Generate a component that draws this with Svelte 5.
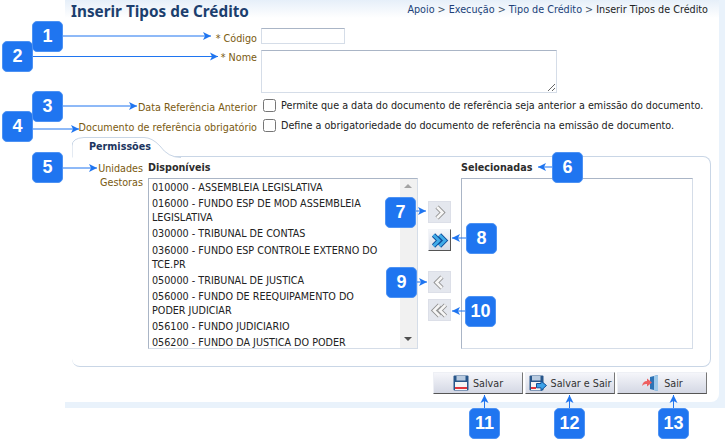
<script lang="ts">
	const units = [
		'010000 - ASSEMBLEIA LEGISLATIVA',
		'016000 - FUNDO ESP DE MOD ASSEMBLEIA LEGISLATIVA',
		'030000 - TRIBUNAL DE CONTAS',
		'036000 - FUNDO ESP CONTROLE EXTERNO DO TCE.PR',
		'050000 - TRIBUNAL DE JUSTICA',
		'056000 - FUNDO DE REEQUIPAMENTO DO PODER JUDICIAR',
		'056100 - FUNDO JUDICIARIO',
		'056200 - FUNDO DA JUSTICA DO PODER'
	];

	const callouts = [
		{ n: 1, x: 32, y: 21 },
		{ n: 2, x: 2, y: 41 },
		{ n: 3, x: 32, y: 91 },
		{ n: 4, x: 2, y: 111 },
		{ n: 5, x: 32, y: 152 },
		{ n: 6, x: 552, y: 152 },
		{ n: 7, x: 385, y: 197 },
		{ n: 8, x: 466, y: 223 },
		{ n: 9, x: 386, y: 267 },
		{ n: 10, x: 465, y: 296 },
		{ n: 11, x: 469, y: 408 },
		{ n: 12, x: 554, y: 408 },
		{ n: 13, x: 658, y: 408 }
	];

	// x1,y1 -> tip x2,y2
	const arrows = [
		[62, 36, 211, 36],
		[32, 56.5, 218, 56.5],
		[62, 106, 137, 106],
		[32, 129, 79, 129],
		[62, 168, 97, 168],
		[552, 167, 538, 167],
		[415, 211, 426, 211],
		[466, 238, 452, 238],
		[416, 282, 427, 282],
		[465, 311, 452, 311],
		[484.5, 408, 484.5, 395],
		[569.5, 408, 569.5, 395],
		[673.5, 408, 673.5, 395]
	];

	function head(a: number[]) {
		const [x1, y1, x2, y2] = a;
		const dx = Math.sign(x2 - x1);
		const dy = Math.sign(y2 - y1);
		const bx = x2 - dx * 8;
		const by = y2 - dy * 8;
		return `${x2},${y2} ${bx + dy * 4},${by + dx * 4} ${bx + dx * 2},${by + dy * 2} ${bx - dy * 4},${by - dx * 4}`;
	}
</script>

<div class="page">
	<main class="panel">
		<div class="inner">
			<header class="top">
				<h1>Inserir Tipos de Crédito</h1>
				<nav>
					<a href="#a">Apoio</a> &gt; <a href="#b">Execução</a> &gt; <a href="#c">Tipo de Crédito</a> &gt; <span>Inserir Tipos de Crédito</span>
				</nav>
			</header>

			<form class="fields" onsubmit={(e) => e.preventDefault()}>
				<label for="cod" class="lbl">* Código</label>
				<input id="cod" class="inp" type="text" />

				<label for="nome" class="lbl nome">* Nome</label>
				<textarea id="nome" class="inp area"></textarea>

				<span class="lbl">Data Referência Anterior</span>
				<label class="chk"><input type="checkbox" /> Permite que a data do documento de referência seja anterior a emissão do documento.</label>

				<span class="lbl">Documento de referência obrigatório</span>
				<label class="chk"><input type="checkbox" /> Define a obrigatoriedade do documento de referência na emissão de documento.</label>
			</form>

			<section class="tabs">
				<div class="tab">
					<svg class="tab-shape" width="109" height="21" viewBox="0 0 109 21">
						<path d="M0 20.5 L0 9 Q0 1 12 .5 L72 .5 Q80 .5 88 9 Q96 20.5 109 20.5" fill="#fff" stroke="#c9d6e6" />
					</svg>
					<span>Permissões</span>
				</div>
				<div class="box">
					<div class="side">Unidades Gestoras</div>
					<div class="col avail">
						<h2>Disponíveis</h2>
						<div class="list">
							<ul>
								{#each units as u}
									<li>{u}</li>
								{/each}
							</ul>
							<div class="scroll">
								<i class="up"></i>
								<i class="down"></i>
							</div>
						</div>
					</div>
					<div class="moves">
						<button class="mv" type="button" aria-label="Adicionar">
							<svg width="17" height="17" viewBox="0 0 17 17">
								<path d="M6 3 L11.5 8.5 L6 14" fill="none" stroke="#8f8f8f" stroke-width="4.4" />
								<path d="M6 3 L11.5 8.5 L6 14" fill="none" stroke="#f6f6f6" stroke-width="2.6" />
							</svg>
						</button>
						<button class="mv on" type="button" aria-label="Adicionar todos">
							<svg width="19" height="17" viewBox="0 0 19 17">
								<path d="M3.5 3 L9 8.5 L3.5 14 M9.5 3 L15 8.5 L9.5 14" fill="none" stroke="#124f9c" stroke-width="4.6" />
								<path d="M3.5 3 L9 8.5 L3.5 14 M9.5 3 L15 8.5 L9.5 14" fill="none" stroke="#41ace9" stroke-width="2.8" />
							</svg>
						</button>
						<button class="mv gap" type="button" aria-label="Remover">
							<svg width="17" height="17" viewBox="0 0 17 17">
								<path d="M11 3 L5.5 8.5 L11 14" fill="none" stroke="#8f8f8f" stroke-width="4.4" />
								<path d="M11 3 L5.5 8.5 L11 14" fill="none" stroke="#f6f6f6" stroke-width="2.6" />
							</svg>
						</button>
						<button class="mv" type="button" aria-label="Remover todos">
							<svg width="19" height="17" viewBox="0 0 19 17">
								<path d="M15.5 3 L10 8.5 L15.5 14" fill="none" stroke="#8f8f8f" stroke-width="4.4" />
								<path d="M15.5 3 L10 8.5 L15.5 14" fill="none" stroke="#f6f6f6" stroke-width="2.6" />
								<path d="M9.5 3 L4 8.5 L9.5 14" fill="none" stroke="#8f8f8f" stroke-width="4.4" />
								<path d="M9.5 3 L4 8.5 L9.5 14" fill="none" stroke="#f6f6f6" stroke-width="2.6" />
							</svg>
						</button>
					</div>
					<div class="col chosen">
						<h2>Selecionadas</h2>
						<div class="list empty"></div>
					</div>
				</div>
			</section>

			<footer class="actions">
				<button type="button" class="act">
					<svg width="16" height="16" viewBox="0 0 16 16">
						<rect x=".5" y=".5" width="15" height="15" rx="1" fill="#28568a" />
						<rect x="3.5" y="1" width="9" height="4.5" fill="#b9cbe0" />
						<rect x="2" y="7" width="12" height="8" fill="#f5f5f5" />
						<rect x="2" y="12" width="12" height="2" fill="#e0363c" />
					</svg>
					Salvar
				</button>
				<button type="button" class="act">
					<svg width="18" height="16" viewBox="0 0 18 16">
						<rect x=".5" y=".5" width="14" height="15" rx="1" fill="#28568a" />
						<rect x="3" y="1" width="8.5" height="4.5" fill="#b9cbe0" />
						<rect x="2" y="7" width="11" height="8" fill="#f5f5f5" />
						<rect x="2" y="12" width="5" height="2" fill="#e0363c" />
						<path d="M7.5 8.5 H12 V6 L17.5 10.5 L12 15.5 V12.8 H7.5 Z" fill="#3ba1e8" stroke="#124f96" />
					</svg>
					Salvar e Sair
				</button>
				<button type="button" class="act">
					<svg width="19" height="18" viewBox="0 0 19 18">
						<path d="M9 3 L17 1 V17 L9 15 Z" fill="#2d73b5" />
						<path d="M13 2 V16.2 L17 17 V1 Z" fill="#9ec9ea" />
						<path d="M1 12 Q2 7 6 7 V4.5 L11 8.5 L6 12.5 V10 Q3 9.5 1 12 Z" fill="#ee5f60" />
					</svg>
					Sair
				</button>
			</footer>
		</div>
	</main>

	<svg class="arrows" width="725" height="439" viewBox="0 0 725 439">
		{#each arrows as a}
			<line x1={a[0]} y1={a[1]} x2={a[2]} y2={a[3]} stroke="#1f75f0" stroke-width="1" />
			<polygon points={head(a)} fill="#1f75f0" />
		{/each}
	</svg>

	{#each callouts as c}
		<div class="callout" style="left: {c.x}px; top: {c.y}px">{c.n}</div>
	{/each}
</div>

<style>
	:global(body) {
		margin: 0;
		background: #fff;
	}

	.page {
		position: relative;
		width: 725px;
		height: 439px;
		overflow: hidden;
		font-family: 'DejaVu Sans', sans-serif;
		font-size: 9.65px;
		color: #333;
	}

	.panel {
		margin-left: 65px;
		height: 408px;
		box-sizing: border-box;
		background: #e9f2fb;
		padding: 0 6px 6px 0;
	}

	.inner {
		height: 100%;
		background: #fff;
		border-bottom-right-radius: 8px;
	}

	.top {
		height: 18px;
		display: flex;
		justify-content: space-between;
		align-items: center;
		padding: 0 11px 0 6px;
		background: linear-gradient(#e6eff9, #fff);
	}

	h1 {
		margin: 4px 0 0;
		font-family: 'Noto Sans', sans-serif;
		font-size: 15.3px;
		line-height: 18px;
		color: #1c3f6e;
	}

	nav {
		color: #44546a;
	}

	nav a {
		color: #203f78;
		text-decoration: none;
	}

	nav span {
		color: #222;
	}

	.fields {
		display: grid;
		grid-template-columns: 192px 1fr;
		grid-template-rows: 16px 43px 13px 14px;
		row-gap: 6px;
		column-gap: 4px;
		padding-top: 10px;
		height: 119px;
		box-sizing: border-box;
		align-items: center;
	}

	.lbl {
		text-align: right;
		color: #7a5a10;
		white-space: nowrap;
		line-height: 13px;
		position: relative;
		top: 2px;
	}

	.nome {
		align-self: start;
		top: 1px;
	}

	.inp {
		box-sizing: border-box;
		width: 84px;
		height: 16px;
		border: 1px solid #d5dde8;
		border-top-color: #aab5c6;
		margin: 0;
		padding: 0;
		background: #fff;
	}

	.area {
		display: block;
		width: 296px;
		height: 43px;
	}

	.chk {
		display: flex;
		align-items: center;
		gap: 5px;
		color: #222;
		white-space: nowrap;
		line-height: 13px;
	}

	.chk input {
		margin: 0 0 0 2px;
		width: 13px;
		height: 13px;
		flex: none;
	}

	.tabs {
		padding: 0 8px 0 7px;
	}

	.tab {
		position: relative;
		height: 20px;
		margin-bottom: -1px;
		font-weight: bold;
		color: #1c3560;
		z-index: 1;
	}

	.tab-shape {
		position: absolute;
		left: 0;
		top: 0;
	}

	.tab span {
		position: relative;
		display: block;
		padding: 4px 0 0 17px;
	}

	.box {
		height: 211px;
		box-sizing: border-box;
		border: 1px solid #c9d6e6;
		border-left: 0;
		border-radius: 0 8px 8px 8px;
		display: flex;
		align-items: flex-start;
		padding-top: 4px;
	}

	.side {
		width: 71px;
		text-align: right;
		color: #7a5a10;
		line-height: 14px;
		flex: none;
		margin-top: 1px;
	}

	.col h2 {
		margin: 0 0 3px;
		font-size: 9.65px;
		line-height: 14px;
		color: #2c2c2c;
	}

	.avail {
		margin-left: 5px;
		width: 270px;
		flex: none;
	}

	.list {
		box-sizing: border-box;
		height: 171px;
		border: 1px solid #d5dde8;
		border-top-color: #aab5c6;
		border-left-color: #aab5c6;
		display: flex;
		overflow: hidden;
	}

	ul {
		flex: 1;
		margin: 0;
		padding: 1px 15px 0 3px;
		list-style: none;
		color: #222;
	}

	li {
		line-height: 14px;
		padding: 1px 0;
		margin-bottom: .2px;
	}

	.scroll {
		position: relative;
		width: 17px;
		flex: none;
		background: #f1f1f1;
	}

	.up,
	.down {
		position: absolute;
		left: 4px;
		width: 0;
		height: 0;
		border: 4px solid transparent;
	}

	.up {
		top: 5px;
		border-top: 0;
		border-bottom-color: #a3a3a3;
	}

	.down {
		bottom: 7px;
		border-bottom: 0;
		border-top-color: #505050;
	}

	.moves {
		width: 23px;
		margin-left: 10px;
		padding-top: 40px;
		display: flex;
		flex-direction: column;
		gap: 6px;
		flex: none;
	}

	.mv {
		width: 23px;
		height: 22px;
		padding: 0;
		border: 1px solid #dcdfe8;
		background: #e4e7ee;
		display: flex;
		align-items: center;
		justify-content: center;
	}

	.mv.on {
		border-color: #f2f4f8 #555 #555 #f2f4f8;
		background: linear-gradient(#f4f6fa, #d7dbe6);
	}

	.gap {
		margin-top: 14px;
	}

	.chosen {
		margin-left: 10px;
		width: 232px;
		flex: none;
	}

	.actions {
		display: flex;
		justify-content: flex-end;
		gap: 2px;
		padding: 5px 12px 0 0;
	}

	.act {
		width: 90px;
		height: 22px;
		padding: 0;
		display: flex;
		align-items: center;
		justify-content: center;
		gap: 4px;
		font: inherit;
		color: #333;
		border: 1px solid #eef0f5;
		border-bottom: 1px solid #555;
		border-right-color: #777;
		background: linear-gradient(#f5f6fa, #d4d8e4);
	}

	.arrows {
		position: absolute;
		left: 0;
		top: 0;
		pointer-events: none;
	}

	.callout {
		position: absolute;
		width: 31px;
		height: 31px;
		box-sizing: border-box;
		border: 1px solid #4d92f3;
		border-radius: 5px;
		background: #1f75f0;
		color: #fff;
		font: bold 18px/29px 'Liberation Sans', sans-serif;
		text-align: center;
	}
</style>
